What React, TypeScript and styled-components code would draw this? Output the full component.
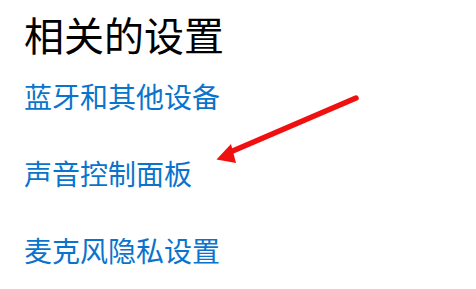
import React from 'react';
import styled, { createGlobalStyle } from 'styled-components';

const GlobalStyle = createGlobalStyle`
  html, body {
    margin: 0;
    padding: 0;
    background: #ffffff;
  }
  body {
    font-family: "Noto Sans CJK SC", "Noto Sans", sans-serif;
  }
`;

const Page = styled.main`
  position: relative;
  width: 476px;
  height: 289px;
  overflow: hidden;
  background: #ffffff;
`;

const Section = styled.section`
  display: flex;
  flex-direction: column;
  padding: 8px 0 0 24px;
`;

const Heading = styled.h2`
  margin: 0;
  font-size: 40px;
  font-weight: 400;
  line-height: 52px;
  color: #000000;
`;

const LinkList = styled.nav`
  display: flex;
  flex-direction: column;
  gap: 37px;
  margin-top: 16px;
`;

const SettingLink = styled.a`
  font-size: 28px;
  line-height: 40px;
  color: #0a74cc;
  text-decoration: none;
  cursor: pointer;
  width: fit-content;
`;

const Arrow = styled.svg`
  position: absolute;
  left: 0;
  top: 0;
  pointer-events: none;
`;

const links = ['蓝牙和其他设备', '声音控制面板', '麦克风隐私设置'];

const App = () => {
  return (
    <>
      <GlobalStyle />
      <Page>
        <Section>
          <Heading>相关的设置</Heading>
          <LinkList>
            {links.map((label) => (
              <SettingLink key={label}>{label}</SettingLink>
            ))}
          </LinkList>
        </Section>
        <Arrow width="476" height="289" viewBox="0 0 476 289">
          <line
            x1="356"
            y1="98"
            x2="228"
            y2="153"
            stroke="#f01010"
            strokeWidth="5.5"
            strokeLinecap="round"
          />
          <polygon points="216.5,159.5 231,144 236,163" fill="#f01010" />
        </Arrow>
      </Page>
    </>
  );
};

export default App;
